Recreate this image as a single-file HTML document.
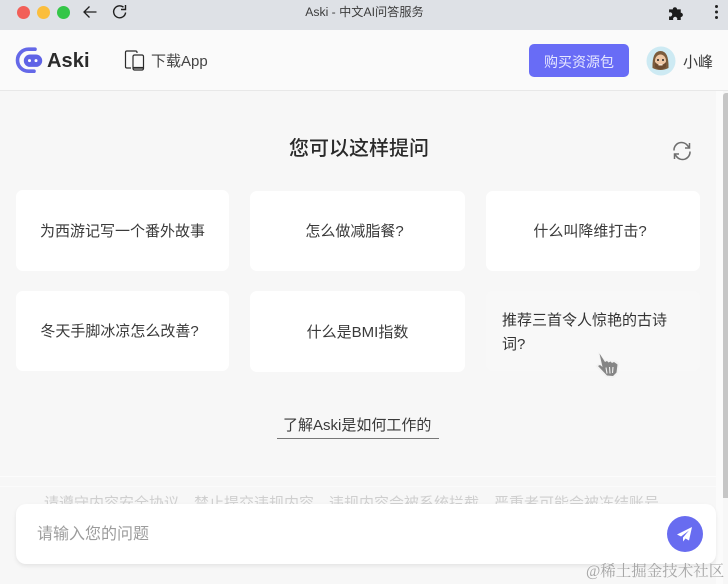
<!DOCTYPE html>
<html lang="zh"><head><meta charset="utf-8">
<style>
*{box-sizing:border-box}
html,body{margin:0;padding:0}
body{width:728px;height:584px;position:relative;overflow:hidden;background:#f7f7f7;font-family:"Liberation Sans","Noto Sans CJK SC",sans-serif;color:#333}
.a{position:absolute;white-space:nowrap}
.card{position:absolute;background:#fff;border-radius:7px;font-size:15px;line-height:22px;display:flex;align-items:center;justify-content:center;color:#3a3a3a;padding-top:2px}
.q{padding-right:6px}
.dot{position:absolute;top:5.500px;width:13px;height:13px;border-radius:50%}
svg{position:absolute;overflow:visible}
</style></head><body>
<div class="a" style="left:0;top:0;width:728px;height:30px;background:#dee1e6"></div>
<div class="dot" style="left:16.500px;background:#f25f58"></div>
<div class="dot" style="left:36.500px;background:#fbbe3d"></div>
<div class="dot" style="left:56.500px;background:#34c648"></div>
<svg style="left:82px;top:4px" width="16" height="16" viewBox="0 0 16 16" fill="none" stroke="#1f1f1f" stroke-width="1.300"><path d="M14.500 8H2M7.500 2.500 2 8l5.500 5.500"/></svg>
<svg style="left:112px;top:4px" width="16" height="16" viewBox="0 0 16 16" fill="none" stroke="#1f1f1f" stroke-width="1.400"><path d="M13.600 8.500A6 6 0 1 1 11.500 3.200"/><path d="M13.500 1v4.500H9" stroke-width="1.400"/></svg>
<div class="a" style="left:0;width:729px;top:4px;text-align:center;font-size:12.200px;line-height:16px;color:#3c3c3c">Aski - 中文AI问答服务</div>
<svg style="left:668px;top:4px" width="17" height="17" viewBox="0 0 16 16" fill="#1c1c1c"><path d="M1 5h3.500a2 2 0 1 1 4 0H12v3.200a2 2 0 1 1 0 4V15H8.500a2 2 0 1 0-3.500 0H1v-3.500a2 2 0 1 0 0-3.500z"/></svg>
<div class="a" style="left:714.500px;top:5px;width:3px;height:3px;border-radius:50%;background:#222;box-shadow:0 5.500px 0 #222,0 11px 0 #222"></div>

<div class="a" style="left:0;top:30px;width:728px;height:61px;background:#fafafa;border-bottom:1px solid #e8e8e8"></div>
<svg style="left:14px;top:46px" width="30" height="28" viewBox="0 0 30 28" fill="none">
<path d="M21 3.200H14.500A11 11 0 0 0 14.500 25.200H20" stroke="#6468e8" stroke-width="3.600" stroke-linecap="round"/>
<path d="M16 8.500h6a6.200 6.200 0 0 1 0 12.400h-6a6.200 6.200 0 0 1 0-12.400z" fill="#5f63e6"/>
<circle cx="15.500" cy="14.600" r="1.500" fill="#fff"/><circle cx="22" cy="14.600" r="1.500" fill="#fff"/></svg>
<div class="a" style="left:47px;top:47px;font-size:20px;line-height:28px;font-weight:700;color:#2b2b2b;letter-spacing:.1px">Aski</div>
<svg style="left:124px;top:50px" width="22" height="21" viewBox="0 0 22 21" fill="none" stroke="#2b2b2b" stroke-width="1.200"><path d="M13 3V2.300Q13 1 11.500 1H3Q1.500 1 1.500 2.300V16.700Q1.500 18 3 18H7"/><rect x="9" y="5" width="10.500" height="15" rx="1.500" fill="#fafafa"/><path d="M9.500 17.800h9.500" stroke-width="1.800"/></svg>
<div class="a" style="left:151px;top:51px;font-size:15px;line-height:21px;color:#444">下载App</div>
<div class="a" style="left:529px;top:44px;width:100px;height:33px;background:#686cf6;border-radius:5px;color:#e6e7ff;font-size:14px;line-height:36px;text-align:center">购买资源包</div>
<svg style="left:646px;top:46px" width="30" height="30" viewBox="0 0 30 30"><circle cx="15" cy="15" r="14.500" fill="#cdeaf3"/><path d="M6.500 22Q6 5 14.500 5T22.500 22Q14.500 26 6.500 22z" fill="#7c5c3c"/><ellipse cx="14.500" cy="15" rx="5.500" ry="6.500" fill="#eec7a4"/><path d="M9 16q5.500 6 11 0v5q-5.500 5-11 0z" fill="#6d4c30"/><rect x="12.500" y="18" width="4" height="1.500" fill="#f5e5d5"/><circle cx="12" cy="14" r="1" fill="#222"/><circle cx="17" cy="14" r="1" fill="#222"/></svg>
<div class="a" style="left:683px;top:52px;font-size:15px;line-height:21px;color:#3a3a3a">小峰</div>

<div class="a" style="left:716px;top:91px;width:7px;height:493px;background:#fbfbfb"></div>
<div class="a" style="left:723px;top:93px;width:5px;height:405px;background:#c6c6c6;border-radius:3px 0 0 0"></div>

<div class="a" style="left:289px;top:135px;font-size:20px;line-height:28px;font-weight:500;color:#2a2a2a">您可以这样提问</div>
<svg style="left:672px;top:141px" width="20" height="20" viewBox="0 0 20 20" fill="none" stroke="#6e6e6e" stroke-width="1.500"><path d="M2 9.500A7.500 7.500 0 0 1 15.500 4.500L17.500 7"/><path d="M17.500 2v5h-4.500"/><path d="M18 10.500A7.500 7.500 0 0 1 4.500 15.500L2.500 13"/><path d="M2.500 18v-5h4.500"/></svg>

<div class="card" style="left:16px;top:190px;width:213px;height:81px">为西游记写一个番外故事</div>
<div class="card q" style="left:250px;top:191px;width:215px;height:80px">怎么做减脂餐?</div>
<div class="card q" style="left:486px;top:191px;width:214px;height:80px">什么叫降维打击?</div>
<div class="card q" style="left:16px;top:291px;width:213px;height:80px">冬天手脚冰凉怎么改善?</div>
<div class="card" style="left:250px;top:291px;width:215px;height:81px">什么是BMI指数</div>
<div class="a" style="left:486px;top:291px;width:214px;height:80px;background:#f8f8f8;border-radius:7px"></div>
<div class="a" style="left:502px;top:308.500px;font-size:15px;line-height:24px;color:#333">推荐三首令人惊艳的古诗<br>词?</div>
<svg style="left:593px;top:349px" width="30" height="30" viewBox="0 0 30 30"><path d="M5 2.500 L12 11 L23 11.500 L26.500 14 L25 24 L20.500 29 L13 28 L2.500 17 L5.500 14.500 L8 16 z" fill="#f2f2f2"/><path d="M6.500 4.500 L12 13 L14 12 L15.500 13.500 L17.500 12.500 L19 14 L21 13 L24.500 15.500 L23.500 23.500 L20 27 L14 26.500 L5 17 L7 16 L9.500 18 z" fill="#858585"/><path d="M13 18.500l1 6M16.500 18l.5 6.500M20 18l-.5 6" stroke="#f0f0f0" stroke-width="1.100"/></svg>

<div class="a" style="left:283px;top:415px;font-size:15px;line-height:22px;color:#3a3a3a">了解Aski是如何工作的</div>
<div class="a" style="left:277px;top:438px;width:162px;height:1px;background:#777"></div>

<div class="a" style="left:0;top:476px;width:716px;height:1px;background:#fcfcfc"></div>
<div class="a" style="left:0;top:486px;width:716px;height:1px;background:#fbfbfb"></div>
<div class="a" style="left:44px;top:494px;font-size:15px;line-height:20px;color:#cfcfcf">请遵守内容安全协议，禁止提交违规内容，违规内容会被系统拦截，严重者可能会被冻结账号</div>
<div class="a" style="left:16px;top:504px;width:700px;height:60px;background:#fff;border-radius:10px;box-shadow:0 2px 4px rgba(0,0,0,.08)"></div>
<div class="a" style="left:37px;top:524px;font-size:16px;line-height:22px;color:#9c9c9c">请输入您的问题</div>
<div class="a" style="left:667px;top:516px;width:36px;height:36px;border-radius:50%;background:#686cf0"></div>
<svg style="left:676px;top:525px" width="18" height="18" viewBox="0 0 18 18" fill="#fff"><path d="M16 2 1 9.500l4 2L13 5.500 7 12.500v4l2.500-3 3.500 2z"/></svg>
<div class="a" style="left:586px;top:561px;font-family:'Liberation Serif','Noto Serif CJK SC',serif;font-size:15.500px;line-height:21px;color:#a6a6a6">@稀土掘金技术社区</div>
</body></html>
